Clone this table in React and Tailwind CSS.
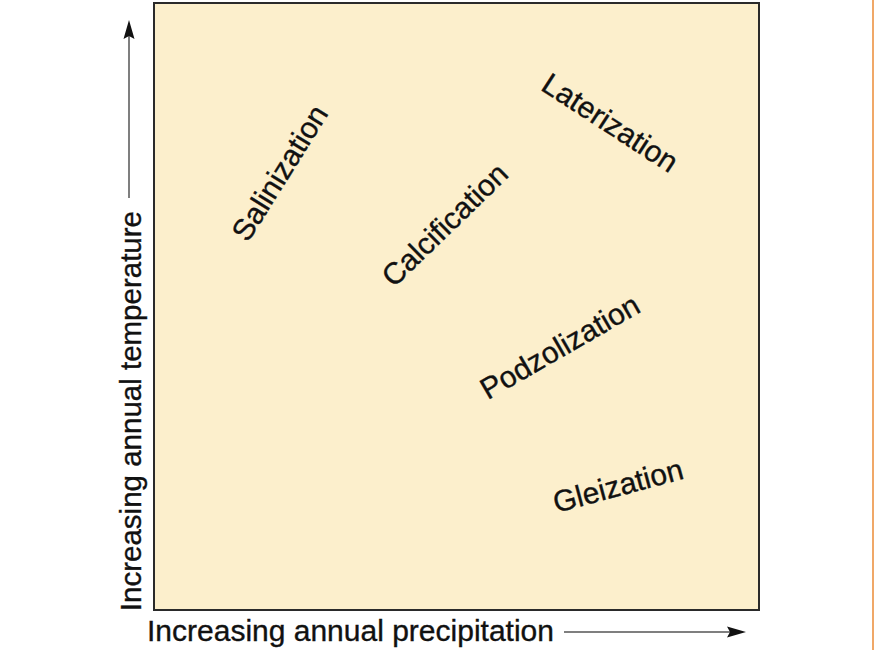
import React from "react";

const labels = [
  { text: "Salinization", pos: "left-[125px] top-[169px]", rot: "-rotate-[58deg]" },
  { text: "Calcification", pos: "left-[290px] top-[221px]", rot: "-rotate-[44deg]" },
  { text: "Laterization", pos: "left-[455px] top-[119px]", rot: "rotate-[33deg]" },
  { text: "Podzolization", pos: "left-[405px] top-[343px]", rot: "-rotate-[30deg]" },
  { text: "Gleization", pos: "left-[463px] top-[482px]", rot: "-rotate-[15deg]" },
];

const App = () => {
  return (
    <div className="flex h-[650px] w-[875px] bg-white font-['Liberation_Sans',Arial,sans-serif] text-[#111] [-webkit-text-stroke:0.35px_#111]">
      <div className="flex flex-col">
        <div className="flex">
          {/* y axis */}
          <div className="flex w-[153px] flex-col items-center pt-[20px] pl-[108px]">
            <svg className="mr-[4px]" width="14" height="178" viewBox="0 0 14 178">
              <line x1="7" y1="12" x2="7" y2="178" stroke="#555" strokeWidth="1.5" />
              <path d="M7 0 L12.5 19 L7 16 L1.5 19 Z" fill="#111" />
            </svg>
            <span className="mt-auto rotate-180 text-[29.5px] leading-none [writing-mode:vertical-rl]">
              Increasing annual temperature
            </span>
          </div>
          {/* plot box */}
          <div className="relative mt-[2px] h-[609px] w-[607px] border-2 border-[#2a2a2a] bg-[#fcefcc]">
            {labels.map((l) => (
              <span
                key={l.text}
                className={`absolute ${l.pos} ${l.rot} -translate-x-1/2 -translate-y-1/2 whitespace-nowrap text-[30px] leading-none`}
              >
                {l.text}
              </span>
            ))}
          </div>
        </div>
        {/* x axis */}
        <div className="mt-[5px] flex items-center pl-[147px]">
          <span className="text-[30px] leading-none">Increasing annual precipitation</span>
          <svg className="ml-[10px] mt-[2px]" width="182" height="14" viewBox="0 0 182 14">
            <line x1="0" y1="7" x2="168" y2="7" stroke="#555" strokeWidth="1.5" />
            <path d="M182 7 L163 1.5 L166 7 L163 12.5 Z" fill="#111" />
          </svg>
        </div>
      </div>
      <div className="ml-auto mr-[1px] h-full w-[2px] bg-[#f0a868]" />
    </div>
  );
};

export default App;
